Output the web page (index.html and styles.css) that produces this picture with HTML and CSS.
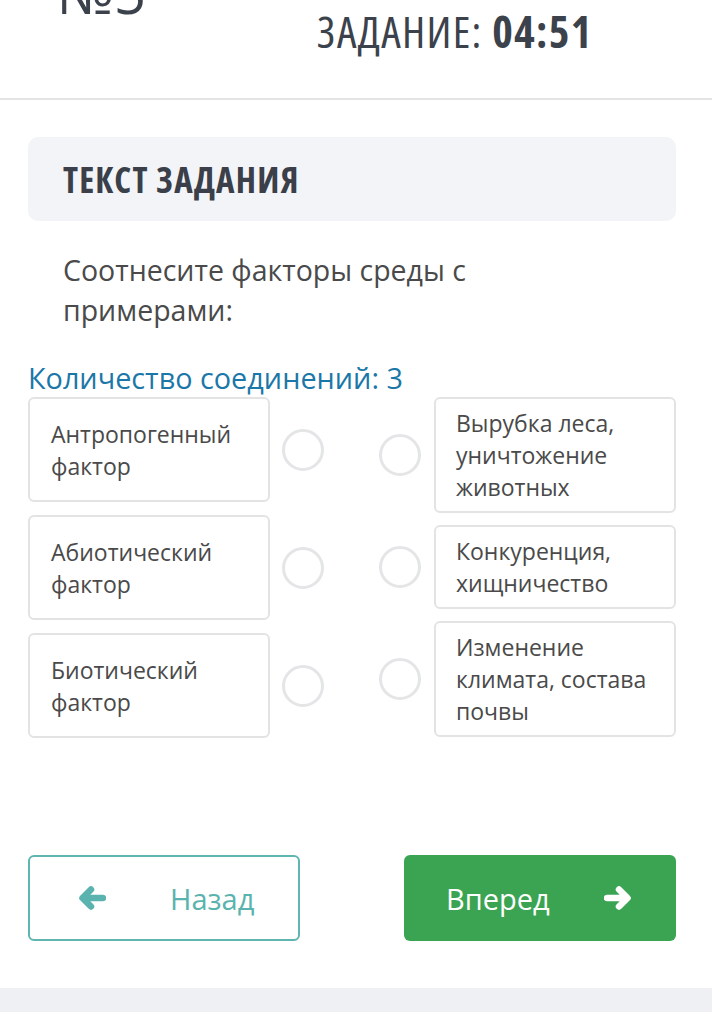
FILE: index.html
```html
<!DOCTYPE html>
<html lang="ru">
<head>
<meta charset="utf-8">
<title>Задание №5</title>
<link rel="stylesheet" href="styles.css">
</head>
<body>
<div class="page">
  <header class="header">
    <div class="num">№5</div>
    <div class="timer">
      <div class="timer-line">ВРЕМЯ НА</div>
      <div class="timer-line">ЗАДАНИЕ: <b>04:51</b></div>
    </div>
  </header>

  <main class="content">
    <div class="task-head">ТЕКСТ ЗАДАНИЯ</div>
    <p class="prompt">Соотнесите факторы среды с<br>примерами:</p>
    <div class="count">Количество соединений: 3</div>

    <div class="match">
      <div class="col col-left">
        <div class="row">
          <div class="card card-left">Антропогенный фактор</div>
          <span class="dot"></span>
        </div>
        <div class="row">
          <div class="card card-left">Абиотический фактор</div>
          <span class="dot"></span>
        </div>
        <div class="row">
          <div class="card card-left">Биотический фактор</div>
          <span class="dot"></span>
        </div>
      </div>
      <div class="col col-right">
        <div class="row">
          <span class="dot"></span>
          <div class="card card-right">Вырубка леса, уничтожение животных</div>
        </div>
        <div class="row">
          <span class="dot"></span>
          <div class="card card-right">Конкуренция, хищничество</div>
        </div>
        <div class="row">
          <span class="dot"></span>
          <div class="card card-right">Изменение климата, состава почвы</div>
        </div>
      </div>
    </div>

    <div class="nav">
      <button class="btn btn-back" type="button">
        <svg class="arrow" viewBox="0 0 28 26" width="28" height="26" aria-hidden="true">
          <path d="M25 13H5M13 4.5L4.5 13L13 21.5" fill="none" stroke="currentColor" stroke-width="6.5" stroke-linecap="round" stroke-linejoin="round"/>
        </svg>
        <span>Назад</span>
      </button>
      <button class="btn btn-next" type="button">
        <span>Вперед</span>
        <svg class="arrow" viewBox="0 0 28 26" width="28" height="26" aria-hidden="true">
          <path d="M3 13H23M15 4.5L23.5 13L15 21.5" fill="none" stroke="currentColor" stroke-width="6.5" stroke-linecap="round" stroke-linejoin="round"/>
        </svg>
      </button>
    </div>
  </main>
</div>
</body>
</html>
```
FILE: styles.css
```css
* { box-sizing: border-box; }

html, body {
  margin: 0;
  padding: 0;
}

body {
  background: #eef0f3;
  font-family: "Open Sans", "Liberation Sans", sans-serif;
  color: #444;
  overflow: hidden;
}

.page {
  background: #fff;
  height: 988px;
  box-shadow: 0 5px 12px rgba(0, 0, 0, 0.07);
  overflow: hidden;
}

.header {
  display: flex;
  align-items: flex-start;
  height: 150px;
  margin-top: -50px;
  border-bottom: 2px solid #e4e4e4;
  color: #3c424c;
}

.num {
  font-size: 56px;
  line-height: 56px;
  margin-left: 57px;
  margin-top: 14px;
  width: 260px;
}

.timer {
  font-size: 44px;
  line-height: 50px;
  font-stretch: 87.5%;
  letter-spacing: 1.3px;
  margin-top: 6px;
}

.timer b { font-weight: 700; }

.content {
  padding: 37px 36px 0 28px;
}

.task-head {
  background: #f3f4f7;
  border-radius: 10px;
  height: 84px;
  padding: 0 35px;
  display: flex;
  align-items: center;
  font-size: 35px;
  font-weight: 700;
  font-stretch: 87.5%;
  letter-spacing: 1.2px;
  color: #3a3f49;
}

.prompt {
  margin: 29px 0 0 35px;
  font-size: 28.5px;
  line-height: 40px;
  color: #4a4a4a;
}

.count {
  margin-top: 29px;
  font-size: 28.8px;
  line-height: 38px;
  color: #1b77a8;
}

.match {
  display: flex;
  justify-content: space-between;
}

.col {
  display: flex;
  flex-direction: column;
  gap: 12px;
}

.col-left { gap: 13px; }

.row {
  display: flex;
  align-items: center;
}

.col-left .row { gap: 12px; }
.col-right .row { gap: 13px; }

.card {
  width: 242px;
  border: 2px solid #e3e3e3;
  border-radius: 6px;
  font-size: 23px;
  line-height: 32px;
  color: #4a4a4a;
}

.card-left {
  min-height: 105px;
  padding: 0 16px 0 21px;
  display: flex;
  align-items: center;
}

.card-right {
  padding: 8px 12px 8px 20px;
}

.dot {
  width: 42px;
  height: 42px;
  border-radius: 50%;
  border: 3px solid #e4e5e7;
  flex: none;
}

.nav {
  display: flex;
  justify-content: space-between;
  margin-top: 117px;
}

.btn {
  width: 272px;
  height: 86px;
  border-radius: 6px;
  font-family: inherit;
  font-size: 29px;
  display: flex;
  align-items: center;
  cursor: pointer;
}

.btn-back {
  background: #fff;
  border: 2px solid #5fb6b1;
  color: #5ab3ae;
  padding: 0 0 0 48px;
  gap: 64px;
}

.btn-next {
  background: #3aa453;
  border: none;
  color: #fff;
  justify-content: space-between;
  padding: 0 44px 0 42px;
}

.arrow { flex: none; display: block; }
```
